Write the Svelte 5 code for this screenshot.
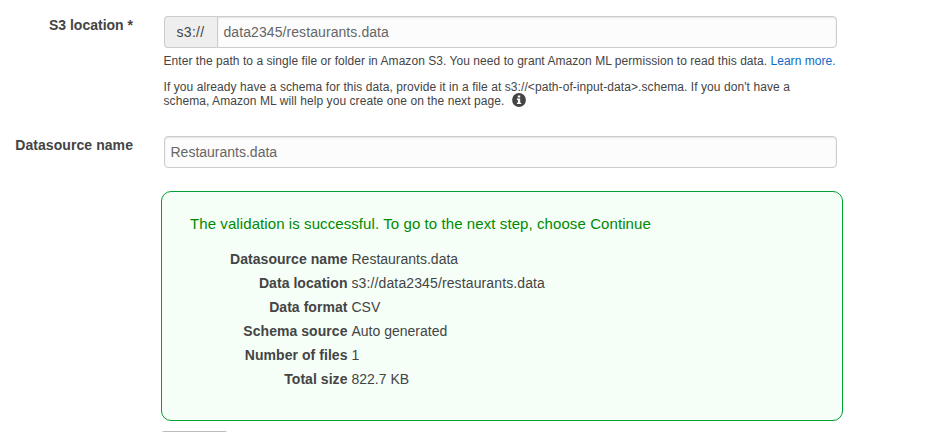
<script>
  const details = [
    { term: 'Datasource name', value: 'Restaurants.data' },
    { term: 'Data location', value: 's3://data2345/restaurants.data', path: true },
    { term: 'Data format', value: 'CSV' },
    { term: 'Schema source', value: 'Auto generated' },
    { term: 'Number of files', value: '1' },
    { term: 'Total size', value: '822.7 KB' },
  ];
</script>

<main>
  <div class="row location">
    <label for="location">S3 location *</label>
    <div class="field">
      <div class="group">
        <span class="addon">s3://</span>
        <div class="input joined" id="location">data2345/restaurants.data</div>
      </div>
      <p class="help first">Enter the path to a single file or folder in Amazon S3. You need to grant Amazon ML permission to read this data. <a href="#learn">Learn more.</a></p>
      <p class="help second">If you already have a schema for this data, provide it in a file at s3://&lt;path-of-input-data&gt;.schema. If you don't have a<br />schema, Amazon ML will help you create one on the next page.
        <svg class="info" viewBox="0 0 14 14" width="14" height="14"><circle cx="7" cy="7" r="6.9" fill="#444" /><path d="M5.8 2.6h2.4v1.9H5.8zM4.9 5.6h3.3v4.1h1v1.4H4.9V9.7h1V7h-1z" fill="#fff" /></svg>
      </p>
    </div>
  </div>

  <div class="row name">
    <label class="wide" for="dsname">Datasource name</label>
    <div class="field">
      <div class="input" id="dsname">Restaurants.data</div>
    </div>
  </div>

  <section class="result">
    <h2>The validation is successful. To go to the next step, choose Continue</h2>
    <dl>
      {#each details as { term, value, path }}
        <div class="detail"><dt>{term}</dt><dd class:path>{value}</dd></div>
      {/each}
    </dl>
  </section>

  <div class="button"></div>
</main>

<style>
  :global(body) {
    background: #fff;
    overflow: hidden;
  }
  main {
    box-sizing: border-box;
    width: 933px;
    height: 432px;
    padding-top: 16px;
    overflow: hidden;
    background: #fff;
    color: #444;
    font: 14px/20px "Liberation Sans", Arial, sans-serif;
  }
  .row {
    display: flex;
  }
  .location {
    height: 120px;
  }
  .name {
    height: 55px;
  }
  label {
    box-sizing: border-box;
    width: 164px;
    padding-right: 31px;
    margin-top: -1px;
    text-align: right;
    font-weight: bold;
    white-space: nowrap;
  }
  .wide {
    letter-spacing: 0.07px;
  }
  .field {
    width: 673px;
  }
  .group {
    display: flex;
  }
  .input {
    box-sizing: border-box;
    flex: 1;
    height: 32px;
    padding: 0 5.5px;
    border: 1px solid #ccc;
    border-radius: 4px;
    background: #fcfcfc;
    box-shadow: inset 0 1px 2px rgba(0, 0, 0, 0.1);
    color: #666;
    line-height: 31px;
  }
  .joined {
    border-radius: 0 4px 4px 0;
    letter-spacing: 0.08px;
  }
  .addon {
    box-sizing: border-box;
    width: 53px;
    height: 32px;
    padding-left: 11.5px;
    border: 1px solid #ccc;
    border-right: 0;
    border-radius: 4px 0 0 4px;
    background: #eee;
    letter-spacing: 0.3px;
    line-height: 31px;
  }
  .help {
    margin: 0 -20px 0 -0.5px;
    font-size: 12px;
    line-height: 14px;
    white-space: nowrap;
  }
  .first {
    margin-top: 6px;
    letter-spacing: 0.05px;
  }
  .second {
    margin-top: 12px;
    letter-spacing: 0.075px;
  }
  a {
    color: #0f69c6;
    text-decoration: none;
  }
  .info {
    margin: -3px 0 -3px 4px;
    vertical-align: 1px;
  }
  .result {
    box-sizing: border-box;
    width: 682px;
    height: 230px;
    margin-left: 161px;
    padding: 22px 28px 0;
    border: 1px solid #00a032;
    border-radius: 10px;
    background: #f5fff8;
  }
  h2 {
    margin: 0;
    color: #008a00;
    font-size: 15px;
    font-weight: normal;
    letter-spacing: 0.085px;
    line-height: 20px;
  }
  dl {
    margin: 13px 0 0;
  }
  .detail {
    display: flex;
    gap: 4px;
    line-height: 24px;
  }
  dt {
    width: 157.5px;
    text-align: right;
    font-weight: bold;
    letter-spacing: 0.05px;
  }
  dd {
    margin: 0;
  }
  .path {
    letter-spacing: 0.12px;
  }
  .button {
    box-sizing: border-box;
    width: 67px;
    height: 30px;
    margin: 10px 0 0 161px;
    border: 1px solid #bbb;
    border-radius: 3px;
    background: #eee;
  }
</style>
